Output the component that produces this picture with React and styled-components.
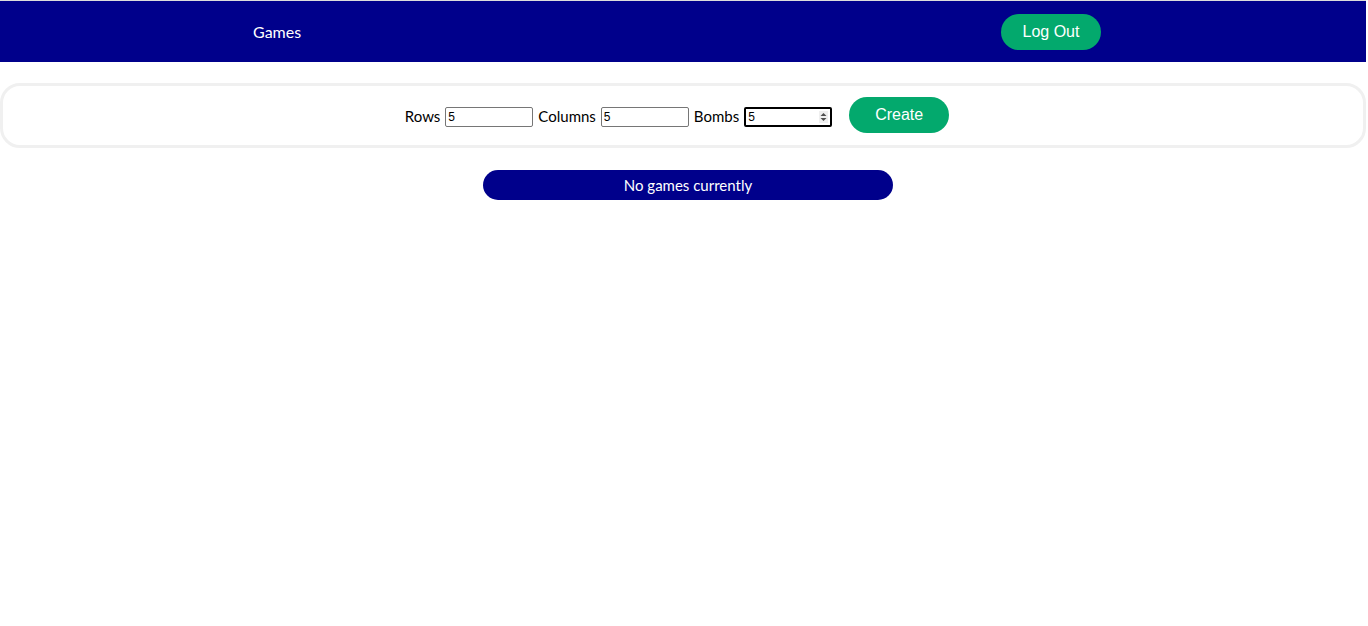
import React from "react";
import styled, { createGlobalStyle } from "styled-components";

const GlobalStyle = createGlobalStyle`
  body {
    margin: 0;
    font-family: "Segoe UI", Lato, "Noto Sans", sans-serif;
    background: #fff;
  }
`;

const Page = styled.div`
  width: 1366px;
`;

const Navbar = styled.nav`
  display: flex;
  align-items: center;
  justify-content: space-between;
  height: 61px;
  padding: 0 265px 0 253px;
  background: #00008b;
  border-top: 1px solid #dcdcdc;
`;

const NavLink = styled.span`
  color: #fff;
  font-size: 16px;
`;

const PillButton = styled.button`
  width: 100px;
  height: 36px;
  border: none;
  border-radius: 18px;
  background: #03a96d;
  color: #fff;
  font-family: "Liberation Sans", Arial, sans-serif;
  font-size: 16px;
  cursor: pointer;
  margin-left: ${(p) => p.$offset || 0}px;
`;

const FormCard = styled.form`
  display: flex;
  align-items: center;
  justify-content: center;
  gap: 5px;
  margin: 21px 0 0 0;
  padding: 11px 12px 12px 0;
  border: 3px solid #f0f0f0;
  border-radius: 20px;
`;

const Label = styled.label`
  font-size: 15px;
  color: #000;
  margin-top: 1px;
`;

const Field = styled.input`
  box-sizing: border-box;
  width: 88px;
  height: 20px;
  margin-top: 4px;
  padding: 1px 2px;
  border: 1px solid #767676;
  border-radius: 2px;
  font-family: "Liberation Sans", Arial, sans-serif;
  font-size: 12px;
  color: #000;
`;

const SpinWrap = styled.span`
  position: relative;
  display: inline-flex;
`;

const NumberField = styled(Field)`
  border: 2px solid #000;
  outline: none;
  -moz-appearance: textfield;
  &::-webkit-inner-spin-button,
  &::-webkit-outer-spin-button {
    -webkit-appearance: none;
    margin: 0;
  }
`;

const Spinner = styled.svg`
  position: absolute;
  right: 4px;
  top: 8px;
  pointer-events: none;
`;

const EmptyList = styled.div`
  box-sizing: border-box;
  width: 410px;
  height: 30px;
  margin: 22px 0 0 483px;
  border-radius: 15px;
  background: #00008b;
  color: #fff;
  font-size: 15px;
  display: flex;
  align-items: center;
  justify-content: center;
`;

export default function App() {
  return (
    <Page>
      <GlobalStyle />
      <Navbar>
        <NavLink>Games</NavLink>
        <PillButton type="button">Log Out</PillButton>
      </Navbar>
      <FormCard onSubmit={(e) => e.preventDefault()}>
        <Label htmlFor="rows">Rows</Label>
        <Field id="rows" type="text" defaultValue="5" />
        <Label htmlFor="cols">Columns</Label>
        <Field id="cols" type="text" defaultValue="5" />
        <Label htmlFor="bombs">Bombs</Label>
        <SpinWrap>
          <NumberField id="bombs" type="number" defaultValue="5" />
          <Spinner width="9" height="12" viewBox="0 0 9 12">
            <rect x="0" y="0" width="9" height="12" fill="#efefef" />
            <path d="M1.5 5 L4.5 2 L7.5 5 Z" fill="#505050" />
            <path d="M1.5 7 L4.5 10 L7.5 7 Z" fill="#505050" />
          </Spinner>
        </SpinWrap>
        <PillButton type="submit" $offset={12}>
          Create
        </PillButton>
      </FormCard>
      <EmptyList>No games currently</EmptyList>
    </Page>
  );
}
